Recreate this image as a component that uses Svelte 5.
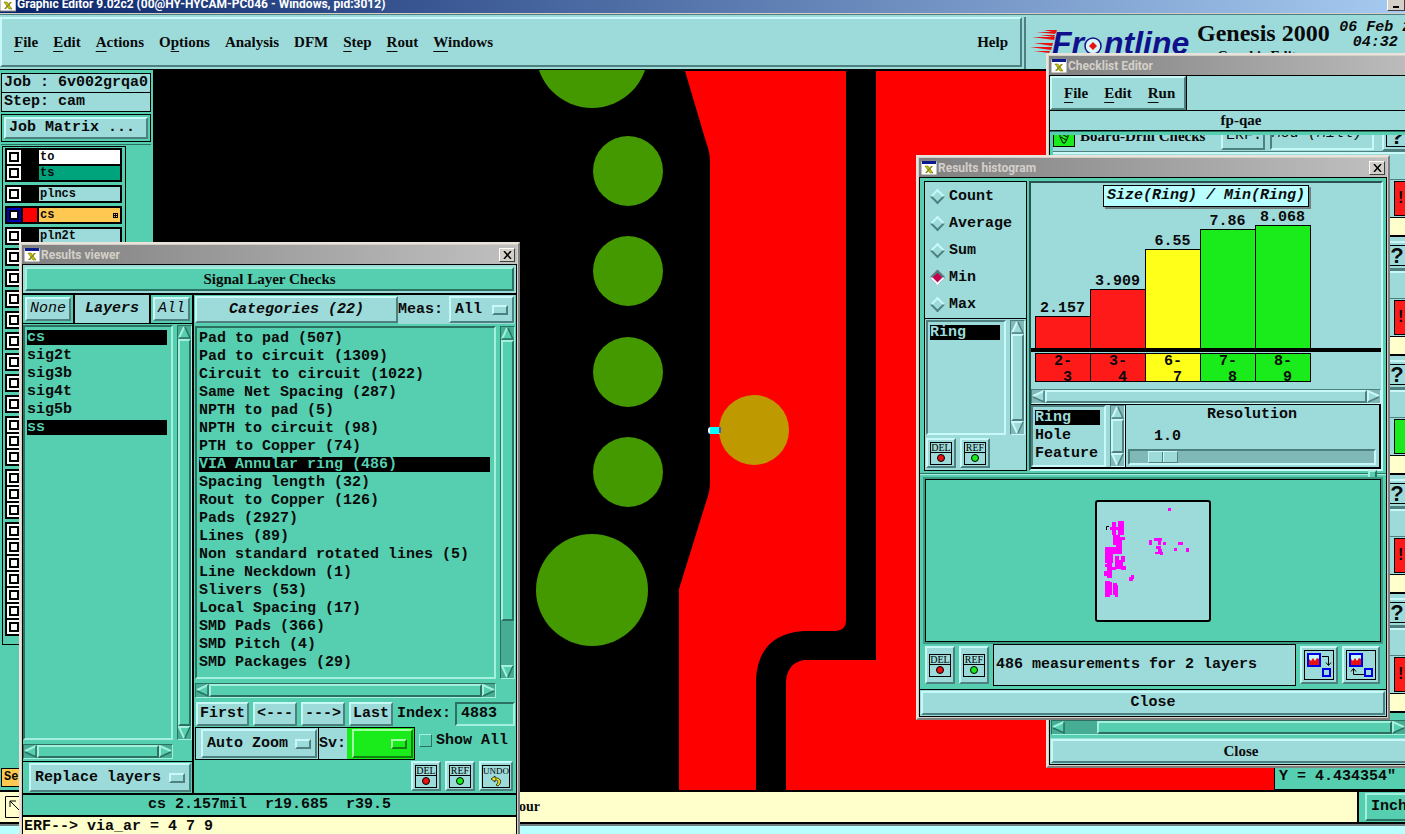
<script>
  const menus = [
    ["", "F", "ile"],
    ["", "E", "dit"],
    ["", "A", "ctions"],
    ["O", "p", "tions"],
    ["Analysis", "", ""],
    ["DFM", "", ""],
    ["", "S", "tep"],
    ["", "R", "out"],
    ["", "W", "indows"]
  ];

  // Layer stack, grouped the way the matrix groups it
  const layerGroups = [
    [
      { name: "to", tone: "white" },
      { name: "ts", tone: "teal" }
    ],
    [{ name: "plncs", tone: "cyan" }],
    [{ name: "cs", tone: "amber", active: true }],
    [{ name: "pln2t", tone: "cyan" }],
    ...[1, 1, 1, 1, 1, 1, 1, 1, 3, 3, 7].map((count) =>
      Array.from({ length: count }, () => ({ name: "", tone: "cyan" }))
    )
  ];

  const resultLayers = ["cs", "sig2t", "sig3b", "sig4t", "sig5b", "ss"];
  let selectedLayers = ["cs", "ss"];

  const categories = [
    "Pad to pad (507)",
    "Pad to circuit (1309)",
    "Circuit to circuit (1022)",
    "Same Net Spacing (287)",
    "NPTH to pad (5)",
    "NPTH to circuit (98)",
    "PTH to Copper (74)",
    "VIA Annular ring (486)",
    "Spacing length (32)",
    "Rout to Copper (126)",
    "Pads (2927)",
    "Lines (89)",
    "Non standard rotated lines (5)",
    "Line Neckdown (1)",
    "Slivers (53)",
    "Local Spacing (17)",
    "SMD Pads (366)",
    "SMD Pitch (4)",
    "SMD Packages (29)"
  ];
  let selectedCategory = "VIA Annular ring (486)";

  let index = "4883";
  let showAll = false;

  const measures = ["Count", "Average", "Sum", "Min", "Max"];
  let measure = "Min";

  const shapes = ["Ring", "Hole", "Feature"];
  let shape = "Ring";
  let resolution = 1;

  const bars = [
    { value: "2.157", height: 32, from: 2, to: 3, tone: "red" },
    { value: "3.909", height: 59, from: 3, to: 4, tone: "red" },
    { value: "6.55", height: 99, from: 6, to: 7, tone: "yellow" },
    { value: "7.86", height: 119, from: 7, to: 8, tone: "lime" },
    { value: "8.068", height: 123, from: 8, to: 9, tone: "lime" }
  ];

  // x, y, width, height of every violation mark on the overview map
  const marks = [
    [1168, 508, 3, 3], [1112, 522, 4, 13], [1118, 521, 6, 14], [1110, 527, 14, 3],
    [1113, 535, 7, 10], [1119, 537, 3, 8], [1121, 537, 4, 3], [1116, 543, 6, 10],
    [1105, 547, 17, 7], [1105, 554, 8, 9], [1115, 556, 4, 13], [1117, 560, 6, 9],
    [1121, 556, 4, 6], [1121, 566, 5, 4], [1107, 563, 5, 15], [1105, 564, 5, 3],
    [1104, 571, 6, 5], [1110, 567, 6, 3], [1105, 581, 5, 16], [1108, 582, 4, 13],
    [1113, 583, 4, 12], [1115, 585, 3, 12], [1129, 577, 4, 4], [1131, 575, 3, 4],
    [1149, 540, 3, 5], [1154, 538, 8, 3], [1158, 541, 3, 4], [1163, 542, 3, 3],
    [1156, 546, 5, 3], [1158, 549, 4, 4], [1155, 552, 7, 2], [1160, 552, 3, 3],
    [1178, 542, 5, 3], [1174, 548, 3, 3], [1186, 548, 3, 4]
  ];

  const checks = [
    { name: "Board-Drill Checks", status: "fail" },
    { name: "", status: "fail" },
    { name: "", status: "ok" },
    { name: "", status: "fail" },
    { name: "", status: "fail" }
  ];

  function toggleLayer(name) {
    if (selectedLayers.includes(name)) {
      selectedLayers = selectedLayers.filter((l) => l !== name);
    } else {
      selectedLayers = [...selectedLayers, name];
    }
  }
</script>

{#snippet appIcon()}
  <svg class="app-icon" width="16" height="16" viewBox="0 0 16 16">
    <rect x="0" y="1" width="16" height="14" fill="#fff" stroke="#888" />
    <rect x="1" y="1" width="14" height="3" fill="#0a1a8a" />
    <path d="M4 6h3l5 7h-3z" fill="#c8c800" stroke="#555500" stroke-width=".5" />
    <path d="M12 6h-2l-6 7h2z" fill="#8a8a10" />
  </svg>
{/snippet}

{#snippet titlebar(text, closable)}
  <div class="titlebar">
    {@render appIcon()}
    <span class="title">{text}</span>
    {#if closable}
      <button class="win-button" aria-label="Close window">
        <svg width="9" height="8" viewBox="0 0 9 8"><path d="M1 0l7 8M8 0l-7 8" stroke="#000" stroke-width="1.5" /></svg>
      </button>
    {/if}
  </div>
{/snippet}

{#snippet arrow(points)}
  <button class="arrow" aria-label="Scroll">
    <svg width="13" height="13" viewBox="0 0 13 13">
      <polygon {points} fill="var(--face)" />
      {#if points.startsWith("6")}
        <path d="M6 1L1 12" stroke="var(--hi)" stroke-width="2" />
        <path d="M7 1L12 12H1" stroke="var(--lo)" stroke-width="1.5" fill="none" />
      {:else if points.startsWith("7")}
        <path d="M12 1H1L6 12" stroke="var(--hi)" stroke-width="2" fill="none" />
        <path d="M7 12L12 1" stroke="var(--lo)" stroke-width="1.5" />
      {:else if points.startsWith("1")}
        <path d="M12 1L1 6" stroke="var(--hi)" stroke-width="2" />
        <path d="M1 7L12 12V1" stroke="var(--lo)" stroke-width="1.5" fill="none" />
      {:else}
        <path d="M1 12V1L12 6" stroke="var(--hi)" stroke-width="2" fill="none" />
        <path d="M12 7L1 12" stroke="var(--lo)" stroke-width="1.5" />
      {/if}
    </svg>
  </button>
{/snippet}

{#snippet vbar(partial)}
  <div class="scroll vertical">
    {@render arrow("6,1 12,12 1,12")}
    <div class="thumb raised" class:partial></div>
    {@render arrow("7,12 1,1 12,1")}
  </div>
{/snippet}

{#snippet hbar(shifted)}
  <div class="scroll horizontal">
    {@render arrow("1,6 12,1 12,12")}
    <div class="thumb raised" class:shifted></div>
    {@render arrow("0,1 12,6 0,12")}
  </div>
{/snippet}

{#snippet stamp(text, color)}
  <button class="stamp raised cyan" class:wide={text === "UNDO"} aria-label={text}>
    <svg width={text === "UNDO" ? 28 : 22} height="23" viewBox="0 0 {text === 'UNDO' ? 28 : 22} 23">
      <rect x=".5" y=".5" width={text === "UNDO" ? 27 : 21} height="22" fill="none" stroke="#000" />
      <text x={text === "UNDO" ? 14 : 11} y="9" text-anchor="middle">{text}</text>
      {#if text === "UNDO"}
        <path d="M13 11l-4 3 4 3v-2c3-1 4 3 1 5l2 1c5-4 2-9-3-8z" fill="#e8e020" stroke="#000" stroke-width=".7" />
      {:else}
        <path d="M1 10.500H21" stroke="#000" />
        <circle cx="11" cy="16" r="3.5" fill={color} stroke="#000" />
      {/if}
    </svg>
  </button>
{/snippet}

<div class="screen">
  <header class="main-title">
    {@render appIcon()}
    <span>Graphic Editor 9.02c2 (00@HY-HYCAM-PC046 - Windows, pid:3012)</span>
    <button class="win-button" aria-label="Minimize">
      <svg width="8" height="10" viewBox="0 0 8 10"><path d="M1 8H7" stroke="#000" stroke-width="2" /></svg>
    </button>
  </header>

  <div class="top cyan">
    <nav class="menubar raised">
      {#each menus as [before, key, after]}
        <button class="menu">{before}<u>{key}</u>{after}</button>
      {/each}
      <button class="menu help">Help</button>
    </nav>
    <div class="brand">
      <svg width="162" height="34" viewBox="0 0 162 34">
        <path d="M6 5H26l-1 2zM2 10H25l-1 3zM4 16H23l-1 3zM0 20H22l-1 3zM4 24H20l-1 2z" fill="#e81010" />
        <path d="M14 3h13l-1 3zM10 8h15l-1 2z" fill="#e81010" />
        <text x="22" y="27" class="logo">Fr</text>
        <circle cx="63" cy="19" r="8" fill="#d8f4f8" stroke="#10108c" stroke-width="1.5" />
        <path d="M63 15l4 4-4 4-4-4z" fill="#e81010" />
        <text x="74" y="27" class="logo">ntline</text>
      </svg>
      <div class="product">
        <span class="genesis">Genesis 2000</span>
        <span>Graphic Editor</span>
      </div>
      <div class="clock">06 Feb 2007<br />04:32 AM</div>
    </div>
  </div>

  <main class="work">
    <aside class="sidebar green">
      <div class="job cyan">Job : 6v002grqa0</div>
      <div class="job cyan">Step: cam</div>
      <div class="matrix"><button class="push raised cyan">Job Matrix ...</button></div>
      <div class="stack-area">
        <div class="stack">
          {#each layerGroups as group}
            <div class="layer-group">
              {#each group as layer}
                <label class="layer">
                  <input type="checkbox" checked={layer.active} />
                  <span class="swatch" class:on={layer.active}></span>
                  <span class="layer-name {layer.tone}">
                    {layer.name}
                    {#if layer.active}<i class="grid-mark"></i>{/if}
                  </span>
                </label>
              {/each}
            </div>
          {/each}
        </div>
      </div>
      <div class="selected-count">Selected : 0</div>
    </aside>

    <section class="board">
      <svg viewBox="153 70 1252 720" preserveAspectRatio="xMinYMin slice">
        <rect x="153" y="70" width="3000" height="2000" fill="#000" />
        <path d="M685 71L706 142Q710 152 710 162V482Q710 492 706 502L679 589V2000H756V680Q758 634 804 631H836Q846 630 846 621V71Z" fill="#f00" />
        <path d="M876 71H3000V2000H786V682Q787 663 804 660H876Z" fill="#f00" />
        <circle cx="592" cy="52" r="56" fill="#490" />
        <circle cx="628" cy="171" r="35" fill="#490" />
        <circle cx="628" cy="271" r="35" fill="#490" />
        <circle cx="628" cy="372" r="35" fill="#490" />
        <circle cx="628" cy="472" r="35" fill="#490" />
        <circle cx="592" cy="590" r="56" fill="#490" />
        <circle cx="754" cy="430" r="35" fill="#bf9900" />
        <rect x="708" y="427" width="13" height="7" rx="3" fill="#fff" />
        <rect x="710" y="427" width="9" height="7" fill="#0ff" />
        <rect x="719" y="427" width="2" height="6" fill="#4a5fb0" />
      </svg>
      <div class="readout green">Y = 4.434354"</div>
    </section>
  </main>

  <footer class="message">
    <button class="cursor-mode" aria-label="Select">
      <svg width="22" height="22" viewBox="0 0 22 22"><path d="M.5.5H21.500V21.500H.5zM5 5L17 17M5 11V5H11" fill="none" stroke="#000" /></svg>
    </button>
    <span class="hint">our</span>
    <div class="units green"><button class="push raised">Inch</button></div>
  </footer>
  <div class="bottom-edge"></div>

  <!-- Checklist editor -->
  <section class="window checklist">
    {@render titlebar("Checklist Editor", false)}
    <div class="pane cyan">
      <nav class="sub-menu raised">
        <button class="menu"><u>F</u>ile</button>
        <button class="menu"><u>E</u>dit</button>
        <button class="menu"><u>R</u>un</button>
      </nav>
      <div class="list-name">fp-qae</div>
      <div class="check-view green">
        <div class="checks cyan">
          {#each checks as check}
            <div class="check-head">
              <svg width="22" height="22" viewBox="0 0 22 22">
                <rect x=".5" y=".5" width="21" height="21" fill="#1aeb1a" stroke="#000" />
                <path d="M7 6h8v6l-3 6h-2l-3-6zM7 8l7 4M8 12l5 3" fill="none" stroke="#000" />
              </svg>
              <span class="check-name">{check.name}</span>
              {#if check.name}
                <button class="push raised erf">ERF:</button>
                <span class="sunken model">Mod (Mill)</span>
              {/if}
              <button class="ask raised"><b>?</b></button>
            </div>
            <div class="check-gap"></div>
            <div class="check-status"><span class={check.status}>{check.status === "fail" ? "!!" : ""}</span></div>
            <div class="check-note"></div>
          {/each}
        </div>
      </div>
      <div class="check-scroll green">{@render hbar(true)}</div>
      <div class="close-row"><button class="push raised close serif">Close</button></div>
    </div>
  </section>

  <!-- Results histogram -->
  <section class="window histogram">
    {@render titlebar("Results histogram", true)}
    <div class="pane green">
      <div class="analysis">
        <div class="stat-panel cyan">
          <div class="radios">
            {#each measures as name}
              <label><input type="radio" name="measure" value={name} bind:group={measure} />{name}</label>
            {/each}
          </div>
          <div class="with-bar ring-list">
            <ul class="list sunken">
              <li><button class="entry on">Ring</button></li>
            </ul>
            {@render vbar(false)}
          </div>
          <div class="stamps">
            {@render stamp("DEL", "#e81010")}
            {@render stamp("REF", "#1aeb1a")}
          </div>
        </div>

        <div class="chart-panel cyan">
          <div class="chart">
            <div class="chart-title">Size(Ring) / Min(Ring)</div>
            <div class="bars">
              {#each bars as bar}
                <div class="bar-col">
                  <span>{bar.value}</span>
                  <div class="bar {bar.tone}" style="height: {bar.height}px"></div>
                </div>
              {/each}
            </div>
            <div class="ranges">
              {#each bars as bar}
                <div class="range {bar.tone}"><span>{bar.from}-</span><span class="upper">{bar.to}</span></div>
              {/each}
            </div>
          </div>
          {@render hbar(false)}
          <div class="options">
            <div class="with-bar">
              <ul class="list sunken">
                {#each shapes as name}
                  <li><button class="entry" class:on={shape === name} on:click={() => (shape = name)}>{name}</button></li>
                {/each}
              </ul>
              {@render vbar(false)}
            </div>
            <div class="resolution">
              <label for="resolution">Resolution</label>
              <output for="resolution">{resolution.toFixed(1)}</output>
              <input id="resolution" type="range" min="0" max="12" step="0.1" bind:value={resolution} />
            </div>
          </div>
        </div>
      </div>
      <div class="sash"><span class="handle raised"></span></div>
      <div class="overview">
        <svg width="116" height="122" viewBox="1095 500 116 122">
          <rect x="1096" y="501" width="114" height="120" rx="2" fill="#9ddbdb" stroke="#000" stroke-width="2" />
          {#each marks as [x, y, width, height]}
            <rect {x} {y} {width} {height} fill="#f0f" />
          {/each}
          <path d="M1106.500 530V526.500H1109" fill="none" stroke="#000" />
        </svg>
      </div>
      <div class="summary">
        {@render stamp("DEL", "#e81010")}
        {@render stamp("REF", "#1aeb1a")}
        <div class="total cyan">486 measurements for 2 layers</div>
        {#each ["M18 6.500H24.500V15M22 12.500l2.500 3 2.500-3", "M18 24.500H7.500V19M5 21.500l2.500-3 2.500 3"] as path, i}
          <button class="swap raised cyan" aria-label={i === 0 ? "Copy graph" : "Restore graph"}>
            <svg width="30" height="30" viewBox="0 0 30 30">
              <rect x=".5" y=".5" width="29" height="29" fill="none" stroke="#000" />
              <rect x="4" y="4" width="12" height="12" fill="#c8f8f8" stroke="#0000e8" stroke-width="2" />
              <path d="M5 15V9l2 2 2-3 2 3 2-3 2 1v6z" fill="#e81010" />
              <rect x="19" y="19" width="7" height="7" fill="none" stroke="#0000e8" stroke-width="2" />
              <path d={path} fill="none" stroke="#000" />
            </svg>
          </button>
        {/each}
      </div>
      <div class="close-row cyan"><button class="push raised close">Close</button></div>
    </div>
  </section>

  <!-- Results viewer -->
  <section class="window viewer">
    {@render titlebar("Results viewer", true)}
    <div class="pane green">
      <div class="check-title"><div class="raised">Signal Layer Checks</div></div>
      <div class="columns">
        <div class="left">
          <div class="left-head">
            <button class="push raised cyan slim">None</button>
            <strong class="cyan">Layers</strong>
            <button class="push raised cyan slim">All</button>
          </div>
          <div class="with-bar grow">
            <ul class="list sunken">
              {#each resultLayers as name}
                <li>
                  <button class="entry" class:on={selectedLayers.includes(name)} on:click={() => toggleLayer(name)}>{name}</button>
                </li>
              {/each}
            </ul>
            {@render vbar(false)}
          </div>
          <div class="under-list">{@render hbar(false)}</div>
          <div class="replace">
            <span class="option raised cyan">
              <select aria-label="Layer mode"><option>Replace layers</option><option>Append layers</option></select>
            </span>
          </div>
        </div>

        <div class="right">
          <div class="right-head">
            <button class="push raised cyan category">Categories (22)</button>
            <label class="meas cyan" for="meas">Meas:</label>
            <div class="meas-box cyan">
              <span class="option raised">
                <select id="meas"><option>All</option><option>None</option></select>
              </span>
            </div>
          </div>
          <div class="with-bar grow">
            <ul class="list sunken">
              {#each categories as name}
                <li>
                  <button class="entry" class:on={selectedCategory === name} on:click={() => (selectedCategory = name)}>{name}</button>
                </li>
              {/each}
            </ul>
            {@render vbar(true)}
          </div>
          <div class="under-list">{@render hbar(false)}</div>
          <div class="steps">
            <button class="push raised cyan">First</button>
            <button class="push raised cyan">&lt;---</button>
            <button class="push raised cyan">---&gt;</button>
            <button class="push raised cyan">Last</button>
            <label for="index">Index:</label>
            <input id="index" class="sunken" type="text" bind:value={index} />
          </div>
          <div class="view-row">
            <div class="zoom-box cyan">
              <span class="option raised">
                <select aria-label="Zoom mode"><option>Auto Zoom</option><option>No Zoom</option></select>
              </span>
            </div>
            <div class="severity">
              <label for="severity" class="cyan">Sv:</label>
              <span class="option raised lime-tone">
                <select id="severity"><option></option></select>
              </span>
            </div>
            <label class="show-all"><input type="checkbox" bind:checked={showAll} />Show All</label>
          </div>
          <div class="stamps end">
            {@render stamp("DEL", "#e81010")}
            {@render stamp("REF", "#1aeb1a")}
            {@render stamp("UNDO", "")}
          </div>
        </div>
      </div>
      <div class="status"><pre>cs 2.157mil  r19.685  r39.5</pre></div>
      <div class="erf-line">ERF--&gt; via_ar = 4 7 9</div>
    </div>
  </section>
</div>

<style>
  :global(body) {
    overflow: hidden;
    background: #000;
  }

  .screen,
  .screen * {
    box-sizing: border-box;
  }

  .screen {
    position: relative;
    display: flex;
    flex-direction: column;
    height: 100vh;
    overflow: hidden;
    font: bold 15px/18px "Liberation Mono", monospace;
    color: #0a0a0a;
  }

  button,
  input,
  select {
    margin: 0;
    padding: 0;
    border: 0;
    border-radius: 0;
    background: none;
    font: inherit;
    color: inherit;
    outline: none;
  }

  pre,
  ul {
    margin: 0;
    padding: 0;
    font: inherit;
    list-style: none;
  }

  svg {
    display: block;
    flex: none;
  }

  .cyan {
    --face: #9ddbdb;
    --hi: #c8f8f8;
    --lo: #4f8080;
    --trough: #80b8b8;
    background: #9ddbdb;
  }

  .green {
    --face: #56cfb0;
    --hi: #a4f0dc;
    --lo: #2b7060;
    --trough: #46ad94;
    background: #56cfb0;
  }

  .raised {
    border: 2px solid;
    border-color: var(--hi) var(--lo) var(--lo) var(--hi);
  }

  .sunken {
    border: 2px solid;
    border-color: var(--lo) var(--hi) var(--hi) var(--lo);
  }

  .red { background: #ff1a1a; }
  .yellow { background: #ffff1a; }
  .lime { background: #1aeb1a; }

  /* Main window */
  .main-title {
    display: flex;
    align-items: center;
    gap: 1px;
    flex: none;
    height: 14px;
    padding-bottom: 5px;
    background: linear-gradient(90deg, #0a246a, #a6caf0);
    border-bottom: 1px solid #d4d0c8;
    color: #fff;
    font: bold 12px/14px Roboto, sans-serif;
  }

  .main-title .win-button {
    margin-left: auto;
    width: 18px;
    height: 14px;
  }

  .win-button {
    display: flex;
    align-items: center;
    justify-content: center;
    width: 16px;
    height: 14px;
    background: #d4d0c8;
    border: 1px solid;
    border-color: #fff #404040 #404040 #fff;
    color: #000;
  }

  .top {
    display: flex;
    flex: none;
    height: 56px;
    padding-top: 2px;
    border-top: 1px solid #4f8080;
    border-bottom: 1px solid #000;
  }

  .menubar {
    display: flex;
    align-items: center;
    gap: 15px;
    flex: 1;
    padding: 0 12px;
    margin-bottom: 2px;
  }

  .menu {
    font: bold 15px/20px "Liberation Serif", serif;
  }

  .menu u {
    text-underline-offset: 4px;
  }

  .help {
    margin-left: auto;
  }

  .brand {
    display: flex;
    gap: 5px;
    width: 381px;
    margin-left: 2px;
    padding: 1px 0 0 4px;
    border-left: 2px solid #4f8080;
    overflow: hidden;
    white-space: nowrap;
  }

  .brand svg {
    margin-top: 9px;
  }

  .logo {
    font: italic bold 32px "Liberation Sans", sans-serif;
    fill: #10108c;
  }

  .product {
    display: flex;
    flex-direction: column;
    align-items: center;
    flex: none;
    font: bold 14px/18px "Liberation Serif", serif;
  }

  .genesis {
    font-size: 24px;
    line-height: 30px;
  }

  .clock {
    flex: none;
    width: 108px;
    padding-top: 2px;
    font-style: italic;
    line-height: 15px;
    text-align: center;
  }

  .work {
    display: flex;
    flex: 1;
    min-height: 0;
  }

  .sidebar {
    display: flex;
    flex-direction: column;
    width: 153px;
    padding: 3px 2px 3px 1px;
  }

  .job {
    height: 20px;
    margin-bottom: -1px;
    padding-left: 2px;
    border: 1px solid #000;
    white-space: nowrap;
  }

  .matrix {
    margin-top: 3px;
    padding: 2px;
    border: 1px solid #000;
  }

  .push {
    padding: 0 3px;
    background-color: var(--face);
    white-space: nowrap;
  }

  .matrix .push {
    width: 100%;
    height: 22px;
    text-align: left;
  }

  .stack-area {
    flex: 1;
    min-height: 0;
    margin-top: 2px;
    border-top: 1px solid var(--lo);
    padding-top: 1px;
  }

  .stack {
    display: flex;
    flex-direction: column;
    gap: 3px;
    width: 124px;
    padding: 1px 3px 8px 2px;
    margin-left: 1px;
    border: 1px solid #000;
  }

  .layer-group {
    display: flow-root;
    padding: 2px 0 0 2px;
    background: #000;
  }

  .layer {
    display: flex;
    gap: 2px;
    height: 14px;
    margin-right: 2px;
    margin-bottom: 2px;
  }

  .layer input {
    appearance: none;
    width: 14px;
    height: 14px;
    background: #fff;
    border: 2px solid #fff;
    box-shadow: inset 0 0 0 2px #000;
  }

  .layer input:checked {
    border-color: #0000b8;
  }

  .swatch {
    width: 14px;
  }

  .swatch.on {
    background: #f00;
  }

  .layer-name {
    display: flex;
    align-items: center;
    justify-content: space-between;
    flex: 1;
    padding: 0 2px 0 1px;
    font-size: 12px;
    line-height: 14px;
  }

  .layer-name.white { background: #fff; }
  .layer-name.teal { background: #00a47c; }
  .layer-name.amber { background: #ffc850; }

  .grid-mark {
    width: 5px;
    height: 5px;
    border: 1px solid #000;
    background: linear-gradient(#000, #000) center / 1px 5px no-repeat, linear-gradient(#000, #000) center / 5px 1px no-repeat;
  }

  .selected-count {
    height: 19px;
    padding-left: 2px;
    background: #ffc850;
    border: 1px solid #000;
    font-size: 12px;
    line-height: 17px;
  }

  .board {
    position: relative;
    flex: 1;
    min-width: 0;
    overflow: hidden;
  }

  .board svg {
    width: 100%;
    height: 100%;
  }

  .readout {
    position: absolute;
    right: 0;
    bottom: 0;
    width: 131px;
    height: 24px;
    padding: 1px 4px;
    border: 1px solid #000;
    border-right: 0;
  }

  .message {
    display: flex;
    flex: none;
    height: 34px;
    background: #ffffcc;
    border: solid #000;
    border-width: 2px 0;
  }

  .cursor-mode {
    width: 32px;
    padding-left: 5px;
  }

  .hint {
    flex: 1;
    padding-left: 487px;
    font: bold 14px/30px "Liberation Serif", serif;
  }

  .units {
    width: 48px;
    padding: 1px 0 1px 6px;
    border-left: 2px solid #000;
    overflow: hidden;
  }

  .units .push {
    width: 80px;
    height: 28px;
    padding-left: 4px;
    text-align: left;
  }

  .bottom-edge {
    flex: none;
    height: 10px;
    background: #b8ffff;
    border-top: 2px solid #708080;
  }

  /* Floating windows */
  .window {
    position: absolute;
    padding: 1px;
    background: #d4d0c8;
    border: 2px solid;
    border-color: #e8e4dc #808080 #808080 #e8e4dc;
  }

  .titlebar {
    display: flex;
    align-items: center;
    gap: 1px;
    height: 19px;
    padding: 0 2px;
    background: linear-gradient(90deg, #808080, #c0c0c0);
    color: #d4d0c8;
    font: bold 12px/18px Roboto, sans-serif;
  }

  .title {
    flex: 1;
  }

  .pane {
    border: 1px solid #000;
  }

  .scroll {
    display: flex;
    flex: none;
    background: var(--trough);
    border: 1px solid;
    border-color: var(--lo) var(--hi) var(--hi) var(--lo);
  }

  .vertical {
    flex-direction: column;
    width: 15px;
  }

  .horizontal {
    height: 15px;
  }

  .arrow {
    flex: none;
    width: 13px;
    height: 13px;
  }

  .thumb {
    flex: 1;
    background: var(--face);
  }

  .vertical .partial {
    margin-bottom: 44px;
  }

  .horizontal .shifted {
    margin-left: 32px;
  }

  .with-bar {
    display: flex;
    gap: 4px;
    min-height: 0;
  }

  .list {
    flex: 1;
    padding: 2px 4px 0 2px;
  }

  .list li {
    height: 18px;
    padding: 1px 0 2px;
  }

  .entry {
    display: block;
    width: 100%;
    height: 15px;
    line-height: 15px;
    text-align: left;
    white-space: nowrap;
  }

  .entry.on {
    background: #000;
    color: var(--face);
  }

  .option {
    display: flex;
    align-items: center;
    padding: 0 4px;
    background: var(--face);
  }

  .option select {
    appearance: none;
    flex: 1;
    min-width: 0;
  }

  .option::after {
    content: "";
    width: 12px;
    height: 6px;
    background: var(--face);
    border: 2px solid;
    border-color: var(--hi) var(--lo) var(--lo) var(--hi);
  }

  .stamp {
    display: flex;
    align-items: center;
    justify-content: center;
    width: 30px;
    height: 30px;
  }

  .stamp.wide {
    width: 34px;
  }

  .stamp text {
    font: 10px "Liberation Serif", serif;
  }

  .stamp.wide text {
    font-size: 9px;
  }

  .stamps {
    display: flex;
    gap: 4px;
  }

  .close-row {
    padding: 1px;
  }

  .close {
    display: block;
    width: 100%;
    height: 24px;
  }

  .serif {
    font-family: "Liberation Serif", serif;
  }

  /* Checklist editor */
  .checklist {
    left: 1046px;
    top: 53px;
    width: 390px;
  }

  .sub-menu {
    display: flex;
    align-items: center;
    gap: 16px;
    width: 136px;
    height: 34px;
    padding: 0 12px;
    outline: 1px solid #000;
  }

  .list-name {
    height: 21px;
    border: solid #000;
    border-width: 1px 0;
    font: bold 15px/19px "Liberation Serif", serif;
    text-align: center;
  }

  .check-view {
    height: 589px;
    padding: 3px 0 0 3px;
    overflow: hidden;
    border-top: 1px solid var(--lo);
  }

  .checks {
    margin-top: -14px;
    clip-path: inset(14px 0 0 0);
  }

  .check-head {
    display: flex;
    align-items: center;
    gap: 5px;
    height: 31px;
    padding-right: 16px;
    font: bold 15px/18px "Liberation Serif", serif;
    border-bottom: 1px solid var(--lo);
  }

  .check-name {
    flex: none;
    width: 136px;
  }

  .erf {
    width: 44px;
    height: 28px;
    font: 15px/18px "Liberation Mono", monospace;
  }

  .model {
    width: 104px;
    height: 28px;
    font: italic 15px/20px "Liberation Mono", monospace;
  }

  .ask {
    width: 34px;
    height: 29px;
    margin-left: auto;
    padding: 2px;
  }

  .ask b {
    display: block;
    width: 22px;
    height: 21px;
    border: 1px solid #000;
    font: bold 22px/20px "Liberation Sans", sans-serif;
  }

  .check-gap {
    height: 28px;
    border-top: 2px solid var(--hi);
    border-bottom: 1px solid var(--lo);
  }

  .check-status {
    display: flex;
    height: 37px;
    padding: 1px 2px 1px 0;
  }

  .check-status span {
    width: 36px;
    margin-left: auto;
    padding-left: 3px;
    border: 1px solid #000;
    font: bold 16px/32px "Liberation Sans", sans-serif;
  }

  .fail { background: #ff1a1a; }
  .ok { background: #1aeb1a; }

  .check-note {
    height: 20px;
    margin-bottom: 3px;
    background: #ffffcc;
    border: solid #000;
    border-width: 1px 0 2px;
  }

  .check-scroll {
    padding: 0 26px 3px 1px;
  }

  /* Results histogram */
  .histogram {
    left: 916px;
    top: 155px;
    width: 474px;
  }

  .analysis {
    display: flex;
    gap: 2px;
    height: 290px;
    margin: 3px 3px 0 4px;
  }

  .stat-panel {
    display: flex;
    flex-direction: column;
    width: 103px;
    border: 1px solid #000;
  }

  .radios {
    padding-top: 1px;
    border-bottom: 1px solid #000;
  }

  .radios label {
    display: flex;
    align-items: center;
    gap: 6px;
    height: 27px;
    padding-left: 7px;
  }

  .radios input {
    appearance: none;
    width: 11px;
    height: 11px;
    border: 2px solid;
    border-color: var(--hi) var(--lo) var(--lo) var(--hi);
    transform: rotate(45deg);
  }

  .radios input:checked {
    background: #c8004c;
    border-color: var(--lo) #e8ffff #e8ffff var(--lo);
  }

  .ring-list {
    flex: 1;
    padding: 1px;
  }

  .stat-panel .stamps {
    padding: 2px 1px;
  }

  .chart-panel {
    display: flex;
    flex-direction: column;
    flex: 1;
    border: 2px solid;
    border-color: #2b5050 #c8f8f8 #c8f8f8 #2b5050;
  }

  .chart {
    display: flex;
    flex-direction: column;
    height: 206px;
  }

  .chart-title {
    align-self: center;
    margin-top: 2px;
    padding: 0 3px;
    background: #b8ffff;
    border: 1px solid #000;
    box-shadow: 2px 2px #708080;
    font-style: italic;
    line-height: 20px;
  }

  .bars {
    display: flex;
    align-items: flex-end;
    flex: 1;
    min-height: 0;
    padding-left: 4px;
    border-bottom: 4px solid #000;
  }

  .bar-col {
    width: 55px;
    text-align: center;
  }

  .bar-col span {
    display: block;
    line-height: 15px;
  }

  .bar {
    width: 56px;
    border: 1px solid #000;
    border-bottom: 0;
  }

  .ranges {
    display: flex;
    height: 37px;
    padding: 1px 0 7px 4px;
  }

  .range {
    display: flex;
    flex-direction: column;
    width: 55px;
    padding-left: 18px;
    border: 1px solid #000;
    border-right: 0;
    line-height: 16px;
  }

  .range:last-child {
    width: 56px;
    border-right: 1px solid #000;
  }

  .upper {
    padding-left: 9px;
  }

  .options {
    display: flex;
    flex: 1;
    min-height: 0;
    border: solid #000;
    border-width: 1px 2px 2px 0;
  }

  .options .with-bar {
    width: 94px;
  }

  .resolution {
    display: flex;
    flex-direction: column;
    justify-content: space-between;
    flex: 1;
    padding: 0 3px 2px 2px;
    border-left: 1px solid #000;
  }

  .resolution label {
    line-height: 20px;
    text-align: center;
  }

  .resolution output {
    padding-left: 26px;
    line-height: 20px;
  }

  .resolution input {
    appearance: none;
    width: 100%;
    height: 16px;
    background: var(--trough);
    border: 2px solid;
    border-color: var(--lo) var(--hi) var(--hi) var(--lo);
  }

  .resolution input::-webkit-slider-thumb {
    appearance: none;
    width: 30px;
    height: 12px;
    background: linear-gradient(90deg, transparent 13px, #4f8080 13px, #4f8080 14px, #c8f8f8 14px, #c8f8f8 15px, transparent 15px) #9ddbdb;
    border: 1px solid;
    border-color: #c8f8f8 #4f8080 #4f8080 #c8f8f8;
  }

  .sash {
    display: flex;
    align-items: center;
    justify-content: flex-end;
    height: 6px;
    padding-right: 9px;
    background: linear-gradient(var(--lo), var(--lo)) 0 2px / 100% 1px no-repeat, linear-gradient(var(--hi), var(--hi)) 0 3px / 100% 1px no-repeat;
  }

  .handle {
    flex: none;
    width: 9px;
    height: 9px;
    background: var(--face);
  }

  .overview {
    display: flex;
    align-items: center;
    justify-content: center;
    height: 163px;
    margin: 2px 5px;
    border: 1px solid #000;
    outline: 2px solid #3c9a84;
  }

  .summary {
    display: flex;
    align-items: center;
    gap: 4px;
    height: 46px;
    padding: 0 6px 3px 5px;
    border-bottom: 1px solid #000;
  }

  .summary .stamp {
    height: 38px;
  }

  .total {
    flex: 1;
    height: 42px;
    padding-left: 2px;
    border: 1px solid #000;
    line-height: 40px;
  }

  .swap {
    display: flex;
    align-items: center;
    justify-content: center;
    width: 38px;
    height: 38px;
  }

  /* Results viewer */
  .viewer {
    left: 19px;
    top: 242px;
    width: 501px;
  }

  .check-title {
    padding: 2px;
    background: #9ddbdb;
    border-bottom: 2px solid #000;
    text-align: center;
    font: bold 15px/20px "Liberation Serif", serif;
  }

  .check-title div {
    background: #56cfb0;
  }

  .columns {
    display: flex;
    height: 500px;
    border-bottom: 2px solid #000;
  }

  .left,
  .right {
    display: flex;
    flex-direction: column;
  }

  .left {
    flex: none;
    width: 171px;
    border-right: 2px solid #000;
  }

  .right {
    flex: 1;
    min-width: 0;
    padding: 0 1px;
  }

  .left-head {
    display: flex;
    height: 29px;
    margin-bottom: 1px;
    border-bottom: 1px solid #000;
  }

  .left-head strong {
    flex: 1;
    border: solid #000;
    border-width: 0 2px;
    font-style: italic;
    line-height: 28px;
    text-align: center;
  }

  .slim {
    margin: 2px;
    font-weight: normal;
    font-style: italic;
  }

  .right-head {
    display: flex;
    height: 31px;
    padding-bottom: 2px;
  }

  .category {
    width: 207px;
    margin: 1px 0;
    font-style: italic;
  }

  .meas {
    line-height: 30px;
    width: 51px;
  }

  .meas-box {
    display: flex;
    flex: 1;
    padding: 1px;
  }

  .meas-box .option {
    flex: 1;
  }

  .grow {
    flex: 1;
  }

  .under-list {
    margin: 4px 19px 2px 0;
  }

  .replace {
    display: flex;
    height: 32px;
    padding: 1px 1px 1px 6px;
    border-top: 1px solid #000;
  }

  .replace .option {
    flex: 1;
  }

  .steps {
    display: flex;
    align-items: center;
    gap: 4px;
    height: 27px;
    padding-left: 1px;
  }

  .steps .push {
    height: 24px;
    padding: 0 2px;
  }

  .steps input {
    flex: 1;
    min-width: 0;
    height: 24px;
    padding-left: 4px;
  }

  .view-row {
    display: flex;
    height: 33px;
  }

  .zoom-box {
    display: flex;
    width: 124px;
    padding: 1px 1px 1px 5px;
    border: 1px solid #000;
  }

  .zoom-box .option {
    flex: 1;
  }

  .severity {
    display: flex;
    width: 96px;
    background: #1aeb1a;
    border: solid #000;
    border-width: 1px 1px 1px 0;
  }

  .severity label {
    width: 28px;
    line-height: 31px;
  }

  .severity .option {
    flex: 1;
    margin: 1px 1px 1px 5px;
  }

  .lime-tone {
    --face: #1aeb1a;
    --hi: #a0ffa0;
    --lo: #108010;
  }

  .show-all {
    display: flex;
    align-items: center;
    gap: 4px;
    padding: 0 0 6px 4px;
  }

  .show-all input {
    appearance: none;
    width: 13px;
    height: 13px;
    border: 1px solid;
    border-color: var(--hi) var(--lo) var(--lo) var(--hi);
  }

  .end {
    justify-content: flex-end;
    padding: 1px 2px 2px 0;
  }

  .status {
    height: 22px;
    padding-left: 125px;
    border-bottom: 2px solid #000;
    line-height: 20px;
  }

  .erf-line {
    height: 22px;
    padding-left: 1px;
    background: #ffffcc;
    line-height: 20px;
  }
</style>
